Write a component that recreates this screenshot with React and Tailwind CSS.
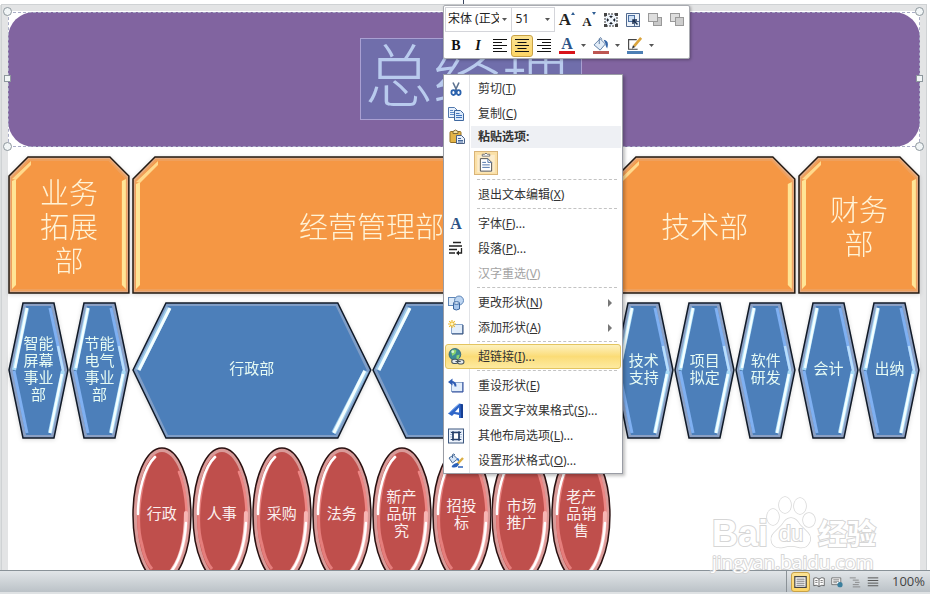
import { useState } from 'react';
import clsx from 'clsx';

const tree = [
  {
    name: ['业务', '拓展', '部'],
    size: 'flex-[122]',
    width: 122,
    cut: 20,
    children: [
      { name: ['智能', '屏幕', '事业', '部'] },
      { name: ['节能', '电气', '事业', '部'] },
    ],
  },
  {
    name: ['经营管理部'],
    size: 'flex-[480]',
    width: 480,
    cut: 23,
    children: [
      { name: ['行政部'], wide: true, children: [['行政'], ['人事'], ['采购'], ['法务']] },
      {
        name: [],
        wide: true,
        children: [['新产', '品研', '究'], ['招投', '标'], ['市场', '推广'], ['老产', '品销', '售']],
      },
    ],
  },
  {
    name: ['技术部'],
    size: 'flex-[183]',
    width: 183,
    cut: 23,
    children: [{ name: ['技术', '支持'] }, { name: ['项目', '拟定'] }, { name: ['软件', '研发'] }],
  },
  {
    name: ['财务', '部'],
    size: 'flex-[122]',
    width: 122,
    cut: 20,
    children: [{ name: ['会计'] }, { name: ['出纳'] }],
  },
];

// Фигуры схемы
function DeptShape({ w, cut }) {
  const points = `1,${cut} ${cut},1 ${w - cut},1 ${w - 1},${cut} ${w - 1},137 1,137`;
  return (
    <svg className="col-start-1 row-start-1 h-full w-full" viewBox={`0 0 ${w} 138`} preserveAspectRatio="none">
      <polygon points={points} fill="#e3ab82" />
      <polygon
        points={`4,${cut + 2} ${cut + 1},4 ${w - cut - 1},4 ${w - 4},${cut + 2} ${w - 4},134 4,134`}
        fill="#f59744"
        stroke="#efa05c"
        strokeWidth="2"
      />
      <polygon points={`4,${cut + 5} 8,${cut + 3} 8,129 4,133`} fill="#ffe596" />
      <polygon points={`4,${cut + 3} ${cut + 3},5 ${cut + 3},9 8,${cut + 4}`} fill="#ffd98c" />
      <polygon points={`${w - 8},${cut + 5} ${w - 4},${cut + 3} ${w - 4},133 ${w - 8},129`} fill="#ffe596" />
      <polygon points={points} fill="none" stroke="#231a12" strokeWidth="1.5" />
    </svg>
  );
}

function SmallHexShape() {
  return (
    <svg className="col-start-1 row-start-1 h-full w-full" viewBox="0 0 61 137" preserveAspectRatio="none">
      <polygon points="1,68 15,1 46,1 60,68 46,136 15,136" fill="#8ba0c4" />
      <polygon points="5,68 18,4 43,4 56,68 43,133 18,133" fill="#4c7fba" />
      <path d="M19 6 6 68" stroke="#a9dcf8" strokeWidth="4" />
      <path d="M19 6 7 66" stroke="#f4ffff" strokeWidth="2.5" />
      <path d="M6 69 19 131" stroke="#7fb0f2" strokeWidth="3" />
      <path d="M42 6 55 67" stroke="#7fb0f2" strokeWidth="3" />
      <path d="M50 44 55 68 50 94" fill="none" stroke="#b9defc" strokeWidth="2.5" />
      <path d="M55 69 42 131" stroke="#a9dcf8" strokeWidth="4" />
      <path d="M54 72 42 131" stroke="#f4ffff" strokeWidth="2.5" />
      <polygon points="1,68 15,1 46,1 60,68 46,136 15,136" fill="none" stroke="#101a28" strokeWidth="1.5" />
    </svg>
  );
}

function WideHexShape() {
  return (
    <svg className="col-start-1 row-start-1 h-full w-full" viewBox="0 0 240 137" preserveAspectRatio="none">
      <polygon points="1,68 34,1 206,1 239,68 206,136 34,136" fill="#7f9dc6" />
      <polygon points="5,68 36,4 204,4 235,68 204,133 36,133" fill="#4c7fba" />
      <path d="M37 6 6 68" stroke="#9ccbea" strokeWidth="5" />
      <path d="M38 6 7 68" stroke="#f4ffff" strokeWidth="3" />
      <path d="M234 69 202 131" stroke="#9ccbea" strokeWidth="5" />
      <path d="M233 69 202 131" stroke="#f4ffff" strokeWidth="3" />
      <polygon points="1,68 34,1 206,1 239,68 206,136 34,136" fill="none" stroke="#101a28" strokeWidth="1.5" />
    </svg>
  );
}

function EllipseShape() {
  return (
    <svg className="col-start-1 row-start-1 h-full w-full" viewBox="0 0 60 137" preserveAspectRatio="none">
      <ellipse cx="30" cy="68" rx="29" ry="67" fill="#d99a98" />
      <ellipse cx="30" cy="68" rx="25" ry="63" fill="#bf4f4c" />
      <path d="M24 9C10 20 2 72 10 98Q13 114 20 122" fill="none" stroke="#e57d7b" strokeWidth="3" />
      <path d="M23 10C12 20 6 46 6 67" fill="none" stroke="#fff" strokeWidth="2.5" strokeLinecap="round" />
      <path d="M47 25C53 40 56 62 54 82" fill="none" stroke="#ee8684" strokeWidth="2.5" strokeLinecap="round" />
      <path d="M54 66C54 98 46 118 36 128" fill="none" stroke="#f7b5b3" strokeWidth="4" strokeLinecap="round" />
      <path d="M54 76C53 98 46 118 37 127" fill="none" stroke="#fff" strokeWidth="2.5" strokeLinecap="round" />
      <ellipse cx="30" cy="68" rx="29" ry="67" fill="none" stroke="#2a1111" strokeWidth="1.5" />
    </svg>
  );
}

function Lines({ lines, className }) {
  return (
    <p className={clsx('z-0 col-start-1 row-start-1 self-center text-center', className)}>
      {lines.map((line) => (
        <span key={line} className="block whitespace-nowrap">
          {line}
        </span>
      ))}
    </p>
  );
}

function Department({ dept }) {
  return (
    <section className={clsx('flex min-w-0 flex-col gap-2', dept.size)}>
      <div className="grid h-[138px] drop-shadow-sm">
        <DeptShape w={dept.width} cut={dept.cut} />
        <Lines lines={dept.name} className="pt-1 text-[29px] leading-[34px] font-light text-[#fff3d6]" />
      </div>
      <div className="flex">
        {dept.children.map((team, i) => (
          <div key={i} className="flex min-w-0 flex-1 flex-col gap-2">
            <div className="grid h-[137px] drop-shadow-sm">
              {team.wide ? <WideHexShape /> : <SmallHexShape />}
              <Lines lines={team.name} className="pb-1 text-[15px] leading-[17px] text-[#e6fbf4]" />
            </div>
            {team.children && (
              <div className="flex">
                {team.children.map((lines) => (
                  <div key={lines.join('')} className="grid h-[137px] min-w-0 flex-1">
                    <EllipseShape />
                    <Lines lines={lines} className="pb-1 text-[15px] leading-[17px] text-[#fbeeee]" />
                  </div>
                ))}
              </div>
            )}
          </div>
        ))}
      </div>
    </section>
  );
}

function Handle({ className, square }) {
  return (
    <span
      className={clsx(
        'absolute border border-[#8d979d] bg-[#f1f5f6]',
        square ? 'size-[7px]' : 'size-[9px] rounded-full',
        className,
      )}
    />
  );
}

// Иконки
function Svg({ children, className = 'size-4' }) {
  return (
    <svg viewBox="0 0 16 16" className={className} fill="none">
      {children}
    </svg>
  );
}

const CutIcon = () => (
  <Svg>
    <path d="M5 1.5 9 10M11 1.5 7 10" stroke="#5d7391" strokeWidth="1.6" />
    <ellipse cx="5.4" cy="11.6" rx="2" ry="2.4" stroke="#2b62ad" strokeWidth="1.8" />
    <ellipse cx="10.6" cy="11.6" rx="2" ry="2.4" stroke="#2b62ad" strokeWidth="1.8" />
  </Svg>
);

const CopyIcon = () => (
  <Svg>
    <path d="M.5 1.5h6l2.500 2.500v7.500h-8.500z" fill="#e8f1fc" stroke="#5279ad" />
    <path d="M2 4.500h3M2 6.500h4M2 8.500h4" stroke="#5c8bc9" />
    <path d="M6.500 4.500h6l3 3v7h-9z" fill="#dceafb" stroke="#3f689f" />
    <path d="M8 7.500h3.500M8 9.500h6M8 11.500h6" stroke="#3f74bc" />
  </Svg>
);

const PasteIcon = () => (
  <Svg>
    <rect x="1" y="2.500" width="11" height="11" rx="1" fill="#e4b446" stroke="#937026" />
    <path d="M4 2.500q2.500-3 5 0v2H4z" fill="#f5e3a4" stroke="#836b35" />
    <path d="M7.500 6.500h5l3 3v5h-8z" fill="#e8f0fa" stroke="#4b6185" />
    <path d="M9 9.500h3M9 11.500h5M9 13h5" stroke="#45679a" />
  </Svg>
);

const LetterIcon = () => (
  <span className="font-['Liberation_Serif',serif] text-base leading-4 font-bold text-[#2d5387]">A</span>
);

const ParagraphIcon = () => (
  <Svg>
    <path d="M5 1.500h8M1 5h13M1 8.500h8M1 12h6" stroke="#222" strokeWidth="1.300" />
    <path d="M13.500 7v5h-4" stroke="#222" strokeWidth="1.300" />
    <path d="m8 12 3-2.500v5z" fill="#222" />
  </Svg>
);

const ChangeShapeIcon = () => (
  <Svg>
    <rect x=".5" y="2.500" width="8" height="8" fill="#dbe9f8" stroke="#5f86b7" />
    <circle cx="11" cy="5.500" r="4.500" fill="#bcd5f2" stroke="#5f86b7" />
    <path d="M5.500 8v6q2.500 2 6 0V8" fill="#a7c6ec" stroke="#39659f" />
    <ellipse cx="8.500" cy="8" rx="3" ry="1.300" fill="#e8f3ff" stroke="#39659f" />
  </Svg>
);

const AddShapeIcon = () => (
  <Svg>
    <rect x="3.500" y="4.500" width="11" height="9" fill="#e3eefb" stroke="#8aa5cb" />
    <path d="M4 14h11V5" stroke="#2e4a76" />
    <path d="M4 0v8M0 4h8M1.200 1.200l5.600 5.600M6.800 1.200 1.200 6.800" stroke="#edb92e" strokeWidth="1.200" />
    <circle cx="4" cy="4" r="1.500" fill="#fff6c2" />
  </Svg>
);

const LinkIcon = () => (
  <Svg className="size-[17px]">
    <circle cx="6.500" cy="6" r="5.500" fill="#3e8b96" stroke="#2d6178" strokeWidth=".8" />
    <path d="M3 3q3-3 5-.5l-1 3-3 2zM8 7l3-1-1 4-2 .5z" fill="#8bd36e" />
    <circle cx="4.500" cy="3.500" r="1.300" fill="#d8f5da" />
    <rect x="3.500" y="10.500" width="6" height="4" rx="2" fill="#e6ecef" stroke="#46545f" />
    <rect x="9" y="11" width="6" height="4" rx="2" fill="#e6ecef" stroke="#46545f" />
    <path d="M7 12.700h5" stroke="#46545f" />
  </Svg>
);

const ResetIcon = () => (
  <Svg>
    <rect x="3.500" y="4.500" width="11" height="9" fill="#e3eefb" stroke="#8aa5cb" />
    <path d="M4 14h11V4" stroke="#2e4a9c" />
    <path d="M7.500 8.500q0-4.500-4-4.500" stroke="#2e5cb4" strokeWidth="2" />
    <path d="M0 4 4.500.5v7z" fill="#2e5cb4" />
  </Svg>
);

const TextEffectIcon = () => (
  <Svg>
    <path
      fillRule="evenodd"
      d="M0 10.500 11 .5l4 1V15h-4v-3l-5-1-2 2zM11 4.500 7 9l4 .5z"
      fill="#2f66c9"
    />
    <path d="M12.500.8 15 1.500V15h-2z" fill="#173f93" />
    <path d="m1 10 10-9" stroke="#82aef0" />
  </Svg>
);

const LayoutIcon = () => (
  <Svg>
    <rect x=".5" y="1" width="15" height="14" fill="#edf3fc" stroke="#3c577e" />
    <path d="M2 4h12M2 6.500h12M2 9h12M2 11.500h12" stroke="#90a9cc" strokeWidth=".8" />
    <rect x="5" y="4.500" width="6" height="7" fill="#fff" stroke="#253f69" strokeWidth="1.500" />
    <path d="M3 4.500h10M3 11.500h10M5 3v10M11 3v10" stroke="#253f69" />
  </Svg>
);

const FormatIcon = () => (
  <Svg>
    <path d="M1 5 5.500 2l4 4-5 4z" fill="#d5e4f6" stroke="#4a6c98" />
    <path d="M4.500 5V1.500q1.500-1.500 2.500.5" stroke="#4a6c98" />
    <path d="M9 5q3 0 2 4L9 7z" fill="#3d7cd3" />
    <path d="m15 5-7 7.500" stroke="#dbae42" strokeWidth="2.400" />
    <path d="M9.500 10q-4 0-6 4 5 2 7.500-2.500z" fill="#2c62ba" />
    <path d="M10 14h5" stroke="#2c62ba" strokeWidth="1.500" />
  </Svg>
);

const CaretDown = ({ className }) => (
  <svg viewBox="0 0 5 3" className={clsx('h-[3px] w-[5px]', className)}>
    <path d="M0 0h5L2.500 3z" fill="#555" />
  </svg>
);

function AlignIcon({ side }) {
  const paths = {
    left: 'M1 2.500h14M1 5.500h9M1 8.500h14M1 11.500h9M1 14.500h14',
    center: 'M1 2.500h14M3.500 5.500h9M1 8.500h14M3.500 11.500h9M1 14.500h14',
    right: 'M1 2.500h14M6 5.500h9M1 8.500h14M6 11.500h9M1 14.500h14',
  };
  return (
    <Svg>
      <path d={paths[side]} stroke="#111" strokeWidth="1.200" transform="translate(0 -1)" />
    </Svg>
  );
}

const menu = [
  { icon: CutIcon, text: '剪切', mark: 'T' },
  { icon: CopyIcon, text: '复制', mark: 'C' },
  { paste: true },
  { line: true },
  { text: '退出文本编辑', mark: 'X' },
  { line: true },
  { icon: LetterIcon, text: '字体', mark: 'F', dots: true },
  { icon: ParagraphIcon, text: '段落', mark: 'P', dots: true },
  { text: '汉字重选', mark: 'V', disabled: true },
  { line: true },
  { icon: ChangeShapeIcon, text: '更改形状', mark: 'N', sub: true },
  { icon: AddShapeIcon, text: '添加形状', mark: 'A', sub: true },
  { line: true },
  { icon: LinkIcon, text: '超链接', mark: 'I', dots: true },
  { line: true },
  { icon: ResetIcon, text: '重设形状', mark: 'E' },
  { icon: TextEffectIcon, text: '设置文字效果格式', mark: 'S', dots: true },
  { icon: LayoutIcon, text: '其他布局选项', mark: 'L', dots: true },
  { icon: FormatIcon, text: '设置形状格式', mark: 'O', dots: true },
];

function MenuItem({ item, active, onHover }) {
  const Icon = item.icon;
  return (
    <button
      type="button"
      role="menuitem"
      disabled={item.disabled}
      onMouseEnter={onHover}
      className={clsx(
        'flex h-[25px] w-full items-center rounded-[3px] border pr-2 text-left',
        active
          ? 'border-[#e3c45f] bg-linear-to-b from-[#fdf1bd] via-[#fbdc76] to-[#fdeaa0]'
          : 'border-transparent',
        item.disabled ? 'text-[#a3a3a3]' : 'text-[#333]',
      )}
    >
      <span className="flex w-6 justify-center pr-1">{Icon && <Icon />}</span>
      <span className="flex-1 pl-2 whitespace-nowrap">
        {item.text}(<u>{item.mark}</u>){item.dots && '...'}
      </span>
      {item.sub && (
        <svg viewBox="0 0 4 8" className="h-2 w-1">
          <path d="M0 0v8l4-4z" fill="#777" />
        </svg>
      )}
    </button>
  );
}

function ContextMenu() {
  const [active, setActive] = useState('超链接');

  return (
    <div
      role="menu"
      className="absolute top-[74px] left-[443px] w-[180px] border border-[#9a9da5] bg-white bg-[linear-gradient(to_right,#fff_25px,#e1e3e7_25px,#e1e3e7_26px,#fff_26px)] px-px pt-px text-[12px] leading-4 shadow-[2px_2px_3px_rgba(0,0,0,0.25)]"
    >
      {menu.map((item, i) => {
        if (item.line) {
          return (
            <div key={i} role="separator" className="h-1 pt-px pr-1 pl-8">
              <div className="border-t border-dashed border-[#c3c3c3]" />
            </div>
          );
        }
        if (item.paste) {
          return (
            <div key={i}>
              <div className="flex h-[22px] items-center">
                <span className="flex w-[26px] pl-1">
                  <PasteIcon />
                </span>
                <span className="flex h-full flex-1 items-center bg-[#eef0f4] pl-[7px] font-bold text-[#333]">
                  粘贴选项:
                </span>
              </div>
              <div className="flex h-[30px] items-center pl-[29px]">
                <button
                  type="button"
                  aria-label="只保留文本"
                  className="flex size-6 items-center justify-center border border-[#d9b477] bg-[#fbe0a6]"
                >
                  <Svg className="size-5">
                    <rect x="1" y="1.500" width="14" height="14" fill="#fceccb" />
                    <path d="M5 2.500V1h2q1-2 2 0h2v1.500z" fill="#fff" stroke="#777" strokeWidth=".8" />
                    <path d="M3.500 4.500h6l3 3v7h-9z" fill="#fff" stroke="#555" strokeWidth=".8" />
                    <path d="M9.500 4.500v3h3M5 7.500h3M5 9.500h6M5 11.500h6" stroke="#5578ad" strokeWidth=".8" />
                  </Svg>
                </button>
              </div>
            </div>
          );
        }
        return (
          <MenuItem key={i} item={item} active={active === item.text} onHover={() => setActive(item.text)} />
        );
      })}
    </div>
  );
}

function ToolButton({ label, active, size = 'h-[22px] w-[22px]', children }) {
  return (
    <button
      type="button"
      aria-label={label}
      className={clsx(
        'flex items-center justify-center rounded-[3px] border',
        size,
        active ? 'border-[#c9a246] bg-linear-to-b from-[#fbe292] to-[#fdd565]' : 'border-transparent',
      )}
    >
      {children}
    </button>
  );
}

function ColorButton({ label, bar, children }) {
  return (
    <button type="button" aria-label={label} className="flex h-[22px] w-[34px] items-center gap-1.5 pl-1">
      <span className="flex w-4 flex-col items-center">
        <span className="flex h-[14px] items-center justify-center">{children}</span>
        <span className={clsx('h-[3px] w-4', bar)} />
      </span>
      <CaretDown />
    </button>
  );
}

function MiniToolbar() {
  return (
    <div className="absolute top-[5px] left-[443px] w-[247px] rounded-[2px] border border-[#a9abb1] bg-white px-px shadow-[1px_1px_3px_rgba(0,0,0,0.3)]">
      <div className="flex h-[27px] items-center text-[12px] text-[#222]">
        <label className="grid h-[25px] w-[68px] items-center border border-[#d4d5da]">
          <select aria-label="字体" className="col-start-1 row-start-1 w-[53px] appearance-none overflow-hidden pb-0.5 pl-0.5">
            <option>宋体 (正文)</option>
          </select>
          <CaretDown className="col-start-1 row-start-1 mr-1 justify-self-end" />
        </label>
        <label className="grid h-[25px] w-[43px] items-center border border-l-0 border-[#d4d5da]">
          <select aria-label="字号" className="col-start-1 row-start-1 w-full appearance-none pb-0.5 pl-[3px]">
            <option>51</option>
          </select>
          <CaretDown className="col-start-1 row-start-1 mr-1 justify-self-end" />
        </label>
        <div className="flex pl-px">
          <ToolButton label="增大字号">
            <span className="font-['Liberation_Serif',serif] text-[17px] leading-5 font-bold">A</span>
            <svg viewBox="0 0 4 3" className="mt-0.5 h-[3px] w-1 self-start">
              <path d="M0 3h4L2 0z" fill="#2f5d93" />
            </svg>
          </ToolButton>
          <ToolButton label="减小字号">
            <span className="pt-1 font-['Liberation_Serif',serif] text-[13px] leading-4 font-bold">A</span>
            <svg viewBox="0 0 4 3" className="mt-0.5 h-[3px] w-1 self-start">
              <path d="M0 0h4L2 3z" fill="#2f5d93" />
            </svg>
          </ToolButton>
          <ToolButton label="组合">
            <Svg className="size-4 shrink-0">
              <rect x="2" y="2" width="12" height="12" fill="#f0f5fb" stroke="#333" strokeDasharray="2 1" />
              <path d="M1 1h3v3H1zM12 1h3v3h-3zM1 12h3v3H1zM12 12h3v3h-3z" fill="#444" />
              <path d="M8 3v10M3 8h10" stroke="#6d8cb8" strokeDasharray="3 4" />
              <path d="m8 6-2-2h4zM8 10l-2 2h4zM6 8 4 6v4zM10 8l2-2v4z" fill="#222" />
            </Svg>
          </ToolButton>
          <ToolButton label="选择">
            <Svg className="size-4 shrink-0">
              <path d="M1.500 1.500h13v13h-13z" fill="#edf3fa" stroke="#51698e" />
              <rect x="3.500" y="3.500" width="6" height="6" fill="#cfe0f4" stroke="#4c70a3" />
              <rect x="9.500" y="9.500" width="5" height="5" fill="#e2edf9" stroke="#51698e" />
              <path d="m12.500 12.500-4-4M8 12V8h4" stroke="#1b2e4d" strokeWidth="1.500" />
            </Svg>
          </ToolButton>
          <ToolButton label="上移一层">
            <Svg className="size-4 shrink-0">
              <rect x="6.500" y="5.500" width="8" height="8" fill="#c9c9c9" stroke="#999" />
              <rect x="1.500" y="1.500" width="9" height="8" fill="#dedede" stroke="#9a9a9a" />
            </Svg>
          </ToolButton>
          <ToolButton label="下移一层">
            <Svg className="size-4 shrink-0">
              <rect x="1.500" y="1.500" width="9" height="8" fill="#dedede" stroke="#9a9a9a" />
              <rect x="6.500" y="5.500" width="8" height="8" fill="#cdcdcd" stroke="#999" />
            </Svg>
          </ToolButton>
        </div>
      </div>
      <div className="flex h-[25px] items-center text-[#111]">
        <ToolButton label="加粗">
          <span className="font-['Liberation_Serif',serif] text-sm font-black">B</span>
        </ToolButton>
        <ToolButton label="倾斜">
          <span className="font-['Liberation_Serif',serif] text-sm font-bold italic">I</span>
        </ToolButton>
        <ToolButton label="左对齐">
          <AlignIcon side="left" />
        </ToolButton>
        <ToolButton label="居中" active>
          <AlignIcon side="center" />
        </ToolButton>
        <ToolButton label="右对齐">
          <AlignIcon side="right" />
        </ToolButton>
        <ColorButton label="字体颜色" bar="bg-[#d8131a]">
          <span className="font-['Liberation_Serif',serif] text-base leading-3 font-bold text-[#2d5387]">A</span>
        </ColorButton>
        <ColorButton label="形状填充" bar="bg-[#bd5652]">
          <Svg className="h-[14px] w-4">
            <path d="m0 9 7-7 6 6-6 7z" fill="#e2ecf7" stroke="#53759f" />
            <path d="M6 8V2q2-3 3 1" stroke="#53759f" />
            <path d="M11 3q7 1 4 10-2-2-2-6z" fill="#3566a8" />
          </Svg>
        </ColorButton>
        <ColorButton label="形状轮廓" bar="bg-[#4c7fb5]">
          <Svg className="h-[14px] w-4">
            <path d="M10 3H0.700v11H11" stroke="#444" strokeWidth="1.300" />
            <path d="m15 1-8 9.500" stroke="#dba53d" strokeWidth="3" />
            <path d="m4.500 13.500 1.200-4 2.500 2z" fill="#333" />
          </Svg>
        </ColorButton>
      </div>
    </div>
  );
}

function Watermark() {
  return (
    <div className="absolute right-[54px] bottom-[20px] text-white [-webkit-text-stroke:2px_#d6d6d6] [paint-order:stroke_fill]">
      <div className="flex items-end font-['Liberation_Sans',sans-serif] font-bold">
        <span className="text-[36px] leading-8">Bai</span>
        <div className="grid h-[54px] w-[46px]">
          <svg viewBox="0 0 46 54" className="col-start-1 row-start-1 overflow-visible" fill="#fff" stroke="#d6d6d6" strokeWidth="1.500">
            <ellipse cx="5" cy="21" rx="6" ry="8" />
            <ellipse cx="17" cy="9" rx="6" ry="8" />
            <ellipse cx="32" cy="10" rx="6" ry="8" />
            <ellipse cx="41" cy="24" rx="6" ry="7" />
            <path d="M23 22q5 0 9 7l8 8q4 5 1 10-3 6-11 4-7-2-14 0-9 2-12-4-2-6 2-10l8-8q4-7 9-7z" />
          </svg>
          <span className="z-0 col-start-1 row-start-1 self-end justify-self-center pb-1 text-[22px] leading-6 font-normal">
            du
          </span>
        </div>
        <span className="pl-1 font-['Noto_Sans_CJK_SC',sans-serif] text-[29px] leading-9">经验</span>
      </div>
      <div className="font-['Open_Sans',sans-serif] text-[19px] leading-6">jingyan.baidu.com</div>
    </div>
  );
}

function StatusBar() {
  return (
    <footer className="flex h-6 shrink-0 items-center justify-end border-t border-b-2 border-t-[#899298] border-b-[#dfe2e4] bg-linear-to-b from-[#e1e5e8] to-[#bbc2c7] pr-[5px]">
      <div className="flex h-full items-center border-l border-[#8b9297] pl-1">
        <ToolButton label="普通视图" active size="h-5 w-[19px]">
          <Svg className="h-3.5 w-[13px] shrink-0">
            <path d="M1 1.500h14v13H1z" fill="#fff" stroke="#444" strokeWidth="1.500" />
            <path d="M3 4.500h10M3 7h10M3 9.500h10M3 12h10" stroke="#555" />
          </Svg>
        </ToolButton>
        <ToolButton label="阅读版式" size="h-5 w-[18px]">
          <Svg className="h-3.5 w-3 shrink-0">
            <path d="M8 4Q4 1 1 3v10q3-2 7 1 4-3 7-1V3Q12 1 8 4zM8 4v10" fill="#fff" stroke="#444" />
            <path d="M3 6h3M3 8.500h3M10 6h3M10 8.500h3" stroke="#555" />
          </Svg>
        </ToolButton>
        <ToolButton label="Web 版式" size="h-5 w-[18px]">
          <Svg className="h-3.5 w-3 shrink-0">
            <path d="M1 2.500h12v9H1z" fill="#fff" stroke="#555" />
            <path d="M3 5h8M3 7h8M3 9h5" stroke="#666" />
            <circle cx="12" cy="11.500" r="3.500" fill="#3b7f9d" />
          </Svg>
        </ToolButton>
        <ToolButton label="大纲视图" size="h-5 w-[18px]">
          <Svg className="size-3 shrink-0">
            <path d="M1 2.500h8M5 5.500h8M8 8.500h6M5 11.500h8M5 14.500h10" stroke="#777" />
          </Svg>
        </ToolButton>
        <ToolButton label="草稿" size="h-5 w-[18px]">
          <Svg className="size-3 shrink-0">
            <path d="M1 2.500h14M1 6h14M1 9.500h14M1 13h14" stroke="#555" strokeWidth="1.300" />
          </Svg>
        </ToolButton>
      </div>
      <span className="pl-2.5 font-['Open_Sans',sans-serif] text-[13px] text-[#444]">100%</span>
    </footer>
  );
}

export default function App() {
  return (
    <div className="relative flex h-screen flex-col overflow-hidden bg-white font-['Noto_Sans','Noto_Sans_CJK_SC',sans-serif]">
      <div className="flex h-[5px] shrink-0 justify-center pr-1">
        <span className="w-px bg-[#3b4660]" />
      </div>
      <main className="flex min-h-0 flex-1 border-l-2 border-[#dcdfe0] pr-1">
        <div className="min-w-0 flex-1 border-6 border-b-0 border-[#e3e4e5] outline outline-[#cfd2d4]">
          <div className="flex flex-col gap-[9px] pt-px">
            {/* Выделенная фигура с заголовком */}
            <div className="relative flex h-[135px] items-center justify-center rounded-[26px] bg-[#8164a0] pb-0.5 pl-3.5">
              <div className="absolute inset-0 border border-dashed border-[#a9adc6]" />
              <h1 className="border border-[#a9a0d2] bg-[#706eab] pr-3 pb-2 pl-1 text-[68px] leading-[72px] font-light whitespace-nowrap text-[#b9cbee]">
                总经理
              </h1>
              <Handle className="-top-[5px] -left-[5px]" />
              <Handle className="-top-[5px] -right-[4px]" />
              <Handle className="-bottom-[4px] -left-[5px]" />
              <Handle className="-right-[4px] -bottom-[4px]" />
              <Handle square className="top-[63px] -left-[4px]" />
              <Handle square className="top-[63px] -right-[3px]" />
            </div>
            <div className="flex gap-[2px]">
              {tree.map((dept) => (
                <Department key={dept.name.join('')} dept={dept} />
              ))}
            </div>
          </div>
        </div>
      </main>
      <StatusBar />
      <Watermark />
      <MiniToolbar />
      <ContextMenu />
    </div>
  );
}
